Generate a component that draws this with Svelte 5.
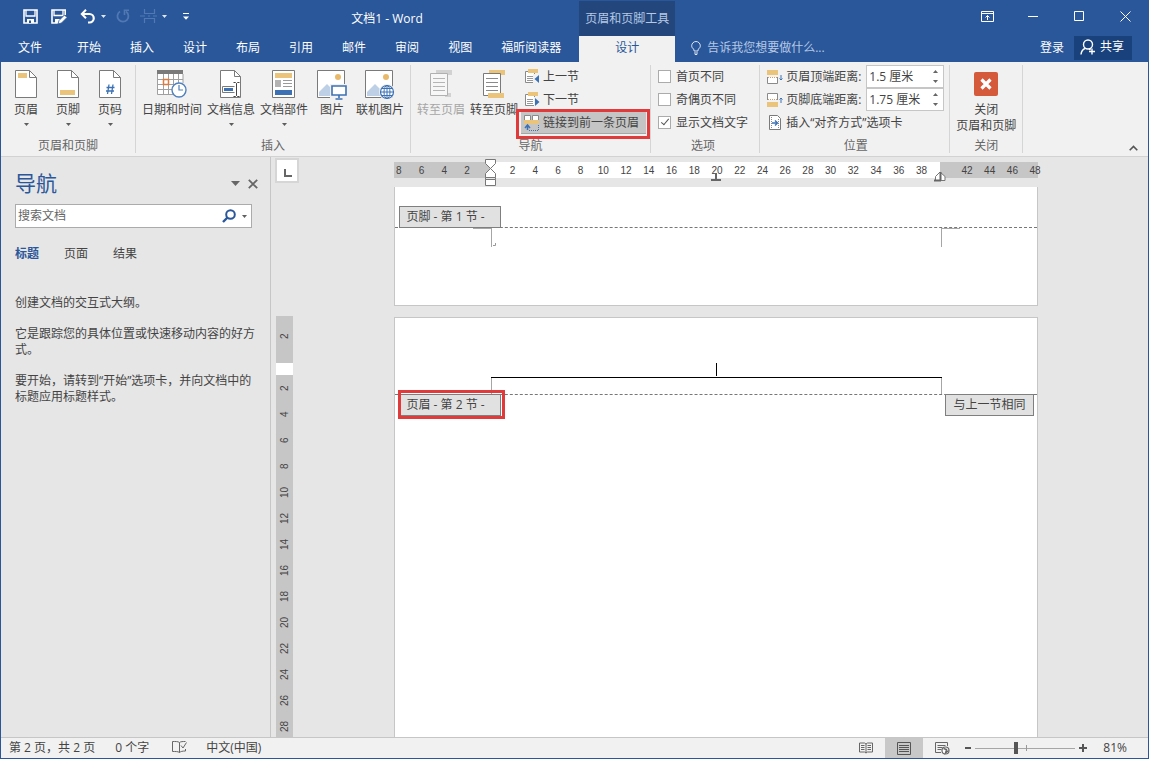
<script lang="ts">
  import type { Snippet } from 'svelte';

  const tabs = ['开始', '插入', '设计', '布局', '引用', '邮件', '审阅', '视图', '福昕阅读器'];
  const paneTabs = ['标题', '页面', '结果'];
  const rulerMarks = Array.from({ length: 29 }, (_, i) => i * 2 - 8);
  const verticalMarks = Array.from({ length: 16 }, (_, i) => i * 2 - 2);

  let activePane = $state('标题');
  let query = $state('');
  let firstDifferent = $state(false);
  let oddEvenDifferent = $state(false);
  let showText = $state(true);
  let headerDistance = $state('1.5 厘米');
  let footerDistance = $state('1.75 厘米');
  let linked = $state(true);
  let zoom = $state(81);

  function markLabel(n: number) {
    return n === 0 || n === 40 ? '' : String(Math.abs(n));
  }
</script>

{#snippet caret()}
  <svg class="caret" width="5" height="3" viewBox="0 0 5 3"><path d="M0 0h5L2.5 3z" fill="currentColor" /></svg>
{/snippet}

{#snippet headerIcon()}
  <svg width="22" height="28" viewBox="0 0 22 28">
    <path d="M.5.5h14l7 7v20H.5z" fill="#fff" stroke="#7a7a7a" />
    <path d="M14.5.5v7h7" fill="none" stroke="#7a7a7a" />
    <path d="M3 3h9v5H3z" fill="#e9c47a" />
  </svg>
{/snippet}

{#snippet footerIcon()}
  <svg width="22" height="28" viewBox="0 0 22 28">
    <path d="M.5.5h14l7 7v20H.5z" fill="#fff" stroke="#7a7a7a" />
    <path d="M14.5.5v7h7" fill="none" stroke="#7a7a7a" />
    <path d="M3 20h15v5H3z" fill="#e9c47a" />
  </svg>
{/snippet}

{#snippet numberIcon()}
  <svg width="22" height="28" viewBox="0 0 22 28">
    <path d="M.5.5h14l7 7v20H.5z" fill="#fff" stroke="#7a7a7a" />
    <path d="M14.5.5v7h7" fill="none" stroke="#7a7a7a" />
    <path d="M10 14.5L8.5 24M14 14.5L12.5 24M7.5 17.5h8M7 21h8" fill="none" stroke="#3c72b4" stroke-width="1.3" />
  </svg>
{/snippet}

{#snippet dateIcon()}
  <svg width="30" height="28" viewBox="0 0 30 28">
    <path d="M1 3h25v22H1z" fill="#fff" />
    <path d="M.5 3v21.5H16M6.5 4v20M11.5 4v20M16.5 4v10M21.5 4v9M26 4v9M1 9.5h25M1 14.5h17M1 19.5h14" fill="none" stroke="#a0a0a0" />
    <path d="M0 0h26v4H0z" fill="#7a7a7a" />
    <path d="M6.5 9.5h5v5h-5z" fill="#fff" stroke="#dd7b3f" stroke-width="1.5" />
    <circle cx="22" cy="20" r="7" fill="#fff" stroke="#4f81bd" stroke-width="1.4" />
    <path d="M22 15v5h4" fill="none" stroke="#4f81bd" stroke-width="1.2" />
  </svg>
{/snippet}

{#snippet infoIcon()}
  <svg width="22" height="28" viewBox="0 0 22 28">
    <path d="M.5.5h14l6 6v21H.5z" fill="#fff" stroke="#7a7a7a" />
    <path d="M14.5.5v6h6" fill="none" stroke="#7a7a7a" />
    <path d="M2.5 16.5h13v6h-13z" fill="#fff" stroke="#7a7a7a" />
    <path d="M4 18h9v3H4z" fill="#3c72b4" />
    <path d="M16.5 13v14" stroke="#fff" stroke-width="4" />
    <path d="M13.5 12.5h2l1 1 1-1h2M16.5 13.5v12M13.5 26.5h2l1-1 1 1h2" fill="none" stroke="#444" />
  </svg>
{/snippet}

{#snippet partsIcon()}
  <svg width="24" height="28" viewBox="0 0 24 28">
    <path d="M.5.5h22v27H.5z" fill="#fff" stroke="#7a7a7a" />
    <path d="M3 3h17v5H3z" fill="#e9c47a" />
    <path d="M3 10h6v7H3z" fill="#b3b3b3" />
    <path d="M11 10.5h9M11 13.5h9M11 16.5h9" stroke="#9a9a9a" />
    <path d="M3 20h17v5H3z" fill="#3c72b4" />
  </svg>
{/snippet}

{#snippet pictureIcon()}
  <svg width="30" height="30" viewBox="0 0 30 30">
    <path d="M.5.5h27v27H.5z" fill="#fff" stroke="#7a7a7a" />
    <circle cx="21" cy="7" r="3" fill="#e9b96a" />
    <path d="M2 26v-4l8-8 6 6v6z" fill="#bdd0e6" />
    <path d="M13 14h17v16H13z" fill="#f1f1f1" />
    <path d="M15 16h14v9H15z" fill="#fff" stroke="#3c72b4" stroke-width="1.6" />
    <path d="M22 25v3M18.5 29h7" stroke="#3c72b4" stroke-width="1.6" />
  </svg>
{/snippet}

{#snippet onlineIcon()}
  <svg width="30" height="30" viewBox="0 0 30 30">
    <path d="M.5.5h27v27H.5z" fill="#fff" stroke="#7a7a7a" />
    <circle cx="21" cy="7" r="3" fill="#e9b96a" />
    <path d="M2 26v-4l8-8 7 7v5z" fill="#bdd0e6" />
    <circle cx="22" cy="22" r="8" fill="#f1f1f1" />
    <circle cx="22" cy="22" r="6.5" fill="#fff" stroke="#3c72b4" stroke-width="1.2" />
    <ellipse cx="22" cy="22" rx="3" ry="6.5" fill="none" stroke="#3c72b4" />
    <path d="M15.5 22h13M17 18.5h10M17 25.5h10M22 15.5v13" stroke="#3c72b4" />
  </svg>
{/snippet}

{#snippet toHeaderIcon()}
  <svg width="22" height="28" viewBox="0 0 22 28">
    <path d="M6 0h16v5H6zM15 23h6v4h-6z" fill="#d2d2d2" />
    <path d="M.5 3.5h17v22H.5z" fill="#f7f7f7" stroke="#b0b0b0" />
    <path d="M3 8.5h12M3 12.5h12M3 16.5h12M3 20.5h12" stroke="#b5b5b5" />
  </svg>
{/snippet}

{#snippet toFooterIcon()}
  <svg width="22" height="28" viewBox="0 0 22 28">
    <path d="M6 0h16v5H6z" fill="#e9c47a" />
    <path d="M.5 3.5h17v22H.5z" fill="#fff" stroke="#7a7a7a" />
    <path d="M3 8.5h12M3 12.5h12M3 16.5h12M3 20.5h12" stroke="#8a8a8a" />
    <path d="M5 23h16v5H5z" fill="#e9c47a" />
  </svg>
{/snippet}

{#snippet bigButton(label: string, icon: Snippet, arrow: boolean, disabled: boolean = false)}
  <button class="big" type="button" {disabled}>
    <span class="big-icon">{@render icon()}</span>
    <span class="big-label">{label}</span>
    {#if arrow}{@render caret()}{/if}
  </button>
{/snippet}

{#snippet spinner(id: string)}
  <span class="steps">
    <button type="button" aria-label="增大" aria-controls={id}>
      <svg width="5" height="3" viewBox="0 0 5 3"><path d="M0 3h5L2.5 0z" fill="#666" /></svg>
    </button>
    <button type="button" aria-label="减小" aria-controls={id}>
      <svg width="5" height="3" viewBox="0 0 5 3"><path d="M0 0h5L2.5 3z" fill="#666" /></svg>
    </button>
  </span>
{/snippet}

<div class="window">
  <header class="titlebar">
    <div class="title-left">
      <div class="quick">
        <button type="button" aria-label="保存">
          <svg width="15" height="15" viewBox="0 0 15 15"><path d="M1 1h13v13H1z" fill="none" stroke="#fff" stroke-width="1.6" /><path d="M3 1v6h9V1" fill="none" stroke="#fff" stroke-width="1.3" /><path d="M4 10h7v4H4z" fill="#fff" /><path d="M6 11.5h2V14H6z" fill="#2a579a" /></svg>
        </button>
        <button type="button" aria-label="另存为">
          <svg width="16" height="15" viewBox="0 0 16 15"><path d="M14.2 6V1H1v13h6" fill="none" stroke="#fff" stroke-width="1.6" /><path d="M3 1v5.5h9V1" fill="none" stroke="#fff" stroke-width="1.3" /><path d="M4 10h5v4H4z" fill="#fff" /><path d="M7 15l1-3.5L13.5 6 16 8.5 10.5 14z" fill="#fff" stroke="#2a579a" stroke-width=".8" /></svg>
        </button>
        <button type="button" class="with-caret" aria-label="撤消">
          <svg width="16" height="15" viewBox="0 0 16 15"><path d="M2 5h7.5a4 4 0 0 1 0 8.500H8" fill="none" stroke="#fff" stroke-width="2.2" /><path d="M6 .8L1.8 5 6 9.2" fill="none" stroke="#fff" stroke-width="2" /></svg>
          {@render caret()}
        </button>
        <button type="button" class="dim" aria-label="恢复" disabled>
          <svg width="14" height="14" viewBox="0 0 14 14"><path d="M4 2.500A5.500 5.500 0 1 0 10 2.600" fill="none" stroke="currentColor" stroke-width="1.8" /><path d="M8.5 6V1.200H13" fill="none" stroke="currentColor" stroke-width="1.6" /></svg>
        </button>
        <button type="button" class="with-caret" aria-label="分页">
          <svg class="dim" width="17" height="14" viewBox="0 0 17 14"><path d="M4.500 0v4.500h10V0M4.500 14V9.500h10V14M0 7h5M8 7h2M13 7h4" fill="none" stroke="currentColor" stroke-width="1.2" /></svg>
          {@render caret()}
        </button>
        <button type="button" aria-label="自定义快速访问工具栏">
          <svg width="6" height="7" viewBox="0 0 6 7"><path d="M0 .5h6" stroke="#fff" /><path d="M0 3.500h6L3 6.800z" fill="#fff" /></svg>
        </button>
      </div>
      <h1>文档1 - Word</h1>
    </div>
    <div class="context-title">页眉和页脚工具</div>
    <div class="window-buttons">
      <button type="button" aria-label="功能区显示选项">
        <svg width="13" height="11" viewBox="0 0 13 11"><path d="M.5.5h12v10H.5zM.5 2.500h12M6.500 9V4.500M4.500 6.500l2-2 2 2" fill="none" stroke="#fff" /></svg>
      </button>
      <button type="button" aria-label="最小化">
        <svg width="10" height="11" viewBox="0 0 10 11"><path d="M0 5.500h10" stroke="#fff" /></svg>
      </button>
      <button type="button" aria-label="最大化">
        <svg width="10" height="10" viewBox="0 0 10 10"><path d="M.5.5h9v9h-9z" fill="none" stroke="#fff" /></svg>
      </button>
      <button type="button" aria-label="关闭">
        <svg width="11" height="11" viewBox="0 0 11 11"><path d="M.5.5l10 10M10.500.5l-10 10" stroke="#fff" /></svg>
      </button>
    </div>

    <nav class="tabs">
      <button type="button" class="file">文件</button>
      {#each tabs as tab}
        <button type="button">{tab}</button>
      {/each}
    </nav>
    <button type="button" class="context-tab">设计</button>
    <div class="tab-right">
      <label class="tell">
        <svg width="10" height="14" viewBox="0 0 10 14"><path d="M3 10V8.500C1.500 7.500.7 6.300.7 4.800a4.300 4.300 0 0 1 8.600 0C9.300 6.300 8.500 7.500 7 8.500V10zM3 12h4M3.800 13.500h2.400" fill="none" stroke="#dbe5f3" /></svg>
        <input type="text" aria-label="操作说明搜索" placeholder="告诉我您想要做什么..." />
      </label>
      <a href="#login">登录</a>
      <button type="button" class="share">
        <svg width="16" height="16" viewBox="0 0 16 16"><circle cx="8" cy="5.500" r="4.500" fill="none" stroke="#fff" stroke-width="1.400" /><path d="M1 15.500c.3-3 1.600-5 4-6M9 9.800l1.500 1M12 9.500v6M9 12.500h6" fill="none" stroke="#fff" stroke-width="1.400" /></svg>
        共享
      </button>
    </div>
  </header>

  <section class="ribbon">
    <div class="group">
      <div class="controls">
        {@render bigButton('页眉', headerIcon, true)}
        {@render bigButton('页脚', footerIcon, true)}
        {@render bigButton('页码', numberIcon, true)}
      </div>
      <h2>页眉和页脚</h2>
    </div>

    <div class="group">
      <div class="controls spaced">
        {@render bigButton('日期和时间', dateIcon, false)}
        {@render bigButton('文档信息', infoIcon, true)}
        {@render bigButton('文档部件', partsIcon, true)}
        {@render bigButton('图片', pictureIcon, false)}
        {@render bigButton('联机图片', onlineIcon, false)}
      </div>
      <h2>插入</h2>
    </div>

    <div class="group">
      <div class="controls spaced">
        {@render bigButton('转至页眉', toHeaderIcon, false, true)}
        {@render bigButton('转至页脚', toFooterIcon, false)}
        <div class="stack">
          <button type="button" class="small">
            <svg width="16" height="16" viewBox="0 0 16 16"><path d="M1.500 2.500h9v11h-9z" fill="#fff" stroke="#8a8a8a" /><path d="M3 7.500h6M3 9.500h6M3 11.500h6" stroke="#999" /><path d="M4 0h10v4H4z" fill="#e9c47a" /><path d="M9 5h7v10H9z" fill="#f1f1f1" /><path d="M15 6v8l-4.500-4z" fill="#3c72b4" /></svg>
            上一节
          </button>
          <button type="button" class="small">
            <svg width="16" height="16" viewBox="0 0 16 16"><path d="M1.500 2.500h9v11h-9z" fill="#fff" stroke="#8a8a8a" /><path d="M3 7.500h6M3 9.500h6M3 11.500h6" stroke="#999" /><path d="M4 0h10v4H4z" fill="#e9c47a" /><path d="M10 5h6v10h-6z" fill="#f1f1f1" /><path d="M11 6v8l4.500-4z" fill="#3c72b4" /></svg>
            下一节
          </button>
          <button type="button" class="small callout" class:pressed={linked} aria-pressed={linked} onclick={() => (linked = !linked)}>
            <svg width="16" height="16" viewBox="0 0 16 16"><path d="M.5 5V.5h6V5M8.500 5V.5h6V5" fill="#fff" stroke="#8a8a8a" /><path d="M0 5h15v4H0z" fill="#e9c47a" /><path d="M3.500 15v-4M1 13l2.500-3L6 13" fill="none" stroke="#3c72b4" stroke-width="1.500" /><path d="M5 15.500h9.500V10" fill="none" stroke="#3c72b4" stroke-dasharray="1 1" /></svg>
            链接到前一条页眉
          </button>
        </div>
      </div>
      <h2>导航</h2>
    </div>

    <div class="group options">
      <div class="stack">
        <label class="check"><input type="checkbox" bind:checked={firstDifferent} />首页不同</label>
        <label class="check"><input type="checkbox" bind:checked={oddEvenDifferent} />奇偶页不同</label>
        <label class="check"><input type="checkbox" bind:checked={showText} />显示文档文字</label>
      </div>
      <h2>选项</h2>
    </div>

    <div class="group position">
      <div class="stack">
        <div class="distance">
          <svg width="16" height="16" viewBox="0 0 16 16"><path d="M.5 8v6.500h10V8" fill="#fff" stroke="#8a8a8a" /><path d="M0 1h11v5H0z" fill="#e9c47a" /><path d="M1 8.500h10" stroke="#dd9a5f" stroke-dasharray="1 1" /><path d="M14 6v5M12.500 9.500L14 11l1.500-1.500" fill="none" stroke="#3c72b4" /></svg>
          <label for="header-distance">页眉顶端距离:</label>
          <span class="field">
            <input id="header-distance" type="text" bind:value={headerDistance} />
            {@render spinner('header-distance')}
          </span>
        </div>
        <div class="distance">
          <svg width="16" height="16" viewBox="0 0 16 16"><path d="M.5 8V1.500h10V8" fill="#fff" stroke="#8a8a8a" /><path d="M0 10h11v5H0z" fill="#e9c47a" /><path d="M1 7.500h10" stroke="#dd9a5f" stroke-dasharray="1 1" /><path d="M14 11V6M12.500 7.500L14 6l1.500 1.500" fill="none" stroke="#3c72b4" /></svg>
          <label for="footer-distance">页脚底端距离:</label>
          <span class="field">
            <input id="footer-distance" type="text" bind:value={footerDistance} />
            {@render spinner('footer-distance')}
          </span>
        </div>
        <button type="button" class="small align">
          <svg width="16" height="16" viewBox="0 0 16 16"><path d="M2.500.5h8l3 3v11h-11z" fill="#fff" stroke="#7a7a7a" /><path d="M4.500 2v12M11.500 4v10" stroke="#8a8a8a" stroke-dasharray="1 1" /><path d="M5 8h5M8 5.500L10.500 8 8 10.500" fill="none" stroke="#3c72b4" stroke-width="1.400" /></svg>
          插入“对齐方式”选项卡
        </button>
      </div>
      <h2>位置</h2>
    </div>

    <div class="group">
      <div class="controls">
        <button type="button" class="big">
          <span class="big-icon">
            <svg width="24" height="26" viewBox="0 0 24 26"><rect y="2" width="24" height="24" rx="2" fill="#d5593b" /><path d="M7.500 9.500l9 9M16.500 9.500l-9 9" stroke="#fff" stroke-width="3.200" /></svg>
          </span>
          <span class="big-label">关闭<br />页眉和页脚</span>
        </button>
      </div>
      <h2>关闭</h2>
    </div>

    <button type="button" class="collapse" aria-label="折叠功能区">
      <svg width="9" height="6" viewBox="0 0 9 6"><path d="M.7 5.300L4.500 1.500l3.800 3.800" fill="none" stroke="#555" stroke-width="1.600" /></svg>
    </button>
  </section>

  <main>
    <aside>
      <div class="pane-head">
        <h2>导航</h2>
        <button type="button" aria-label="任务窗格选项"><svg width="9" height="5" viewBox="0 0 9 5"><path d="M0 0h9L4.500 5z" fill="#666" /></svg></button>
        <button type="button" aria-label="关闭窗格"><svg width="10" height="10" viewBox="0 0 10 10"><path d="M.8.8l8.400 8.400M9.200.8L.8 9.200" stroke="#666" stroke-width="1.800" /></svg></button>
      </div>
      <div class="search">
        <input type="text" aria-label="搜索文档" placeholder="搜索文档" bind:value={query} />
        <button type="button" aria-label="搜索"><svg width="14" height="14" viewBox="0 0 14 14"><circle cx="8.500" cy="5.500" r="4.300" fill="none" stroke="#2a579a" stroke-width="2" /><path d="M5.500 8.500L1 13" stroke="#2a579a" stroke-width="2.400" /></svg></button>
        <button type="button" aria-label="搜索选项">{@render caret()}</button>
      </div>
      <div class="pane-tabs">
        {#each paneTabs as tab}
          <button type="button" class:active={activePane === tab} onclick={() => (activePane = tab)}>{tab}</button>
        {/each}
      </div>
      <div class="hint">
        <p>创建文档的交互式大纲。</p>
        <p>它是跟踪您的具体位置或快速移动内容的好方式。</p>
        <p>要开始，请转到“开始”选项卡，并向文档中的标题应用标题样式。</p>
      </div>
    </aside>

    <div class="gutter">
      <button type="button" class="tab-stop" aria-label="左对齐式制表符"><svg width="8" height="8" viewBox="0 0 8 8"><path d="M1 0v7h7" fill="none" stroke="#666" stroke-width="2" /></svg></button>
      <div class="v-ruler">
        {#each verticalMarks as n}
          <span>{markLabel(n)}</span>
        {/each}
      </div>
    </div>

    <div class="canvas">
      <div class="h-ruler">
        <div class="marks">
          {#each rulerMarks as n}
            <span>{markLabel(n)}</span>
          {/each}
        </div>
        <svg class="marker left-indent" width="12" height="28" viewBox="0 0 12 28"><path d="M.5.5h10v4l-5 5-5-5zM5.500 9.500l5 5v4H.5v-4zM.5 20.500h10v6H.5zM.5 18.500v2M10.500 18.500v2" fill="#fff" stroke="#777" /></svg>
        <svg class="marker center-tab" width="10" height="8" viewBox="0 0 10 8"><path d="M5 0v6M0 7h10" stroke="#666" stroke-width="2" /></svg>
        <svg class="marker right-indent" width="12" height="11" viewBox="0 0 12 11"><path d="M1.500 9.500v-4L6 1l5 4.500v4z" fill="#fff" stroke="#777" /><path d="M6.500 1v8M0 9.500h7" stroke="#666" stroke-width="2" /></svg>
      </div>

      <article class="page first">
        <div class="footer-line"><span class="tag">页脚 - 第 1 节 -</span></div>
        <div class="corners">
          <span class="corner left"></span>
          <svg width="4" height="4" viewBox="0 0 4 4"><path d="M3.500 0v2.500H1" fill="none" stroke="#999" /></svg>
          <span class="corner right"></span>
        </div>
      </article>

      <article class="page second">
        <div class="header-text"><span class="cursor"></span></div>
        <div class="header-gap"></div>
        <div class="header-line">
          <span class="tag callout">页眉 - 第 2 节 -</span>
          <span class="tag same">与上一节相同</span>
        </div>
      </article>
    </div>
  </main>

  <footer class="status">
    <span>第 2 页，共 2 页</span>
    <span>0 个字</span>
    <button type="button" aria-label="校对"><svg width="15" height="14" viewBox="0 0 15 14"><path d="M7.500 2.500C6 1.300 3 1.500.5 1.500v10c2.500 0 5.500-.2 7 1zM7.500 12.500c1-1 3-1.500 6-1.500V9M7.500 2.500C8.500 1.500 11 1.500 13.500 1.500M9 5.500l2 2.500 3.500-5.500" fill="none" stroke="#666" /></svg></button>
    <span>中文(中国)</span>
    <div class="views">
      <button type="button" aria-label="阅读视图"><svg width="14" height="12" viewBox="0 0 14 12"><path d="M.5 1h5L7 2l1.500-1h5v9h-5L7 11l-1.500-1h-5zM7 2v9M2 3.500h3.500M2 5.500h3.500M2 7.500h3.500M8.500 3.500H12M8.500 5.500H12M8.500 7.500H12" fill="none" stroke="#666" /></svg></button>
      <button type="button" class="on" aria-label="页面视图"><svg width="14" height="13" viewBox="0 0 14 13"><path d="M.5.5h13v12H.5zM2 3.500h10M2 5.500h10M2 7.500h10M2 9.500h10" fill="none" stroke="#555" /></svg></button>
      <button type="button" aria-label="Web 版式视图"><svg width="15" height="13" viewBox="0 0 15 13"><path d="M12.500 4V.5H.5v10H6M2.500 3.500h8M2.500 5.500h5M2.500 7.500h4" fill="none" stroke="#666" /><circle cx="10.500" cy="8.500" r="3.500" fill="#fff" stroke="#666" stroke-width="1.200" /><path d="M8.500 6.500l3 1-1 3.500 3-2.500" fill="none" stroke="#666" stroke-width="1.400" /></svg></button>
    </div>
    <div class="zoom">
      <button type="button" aria-label="缩小"><svg width="6" height="8" viewBox="0 0 6 8"><path d="M0 4h6" stroke="#555" stroke-width="2" /></svg></button>
      <input type="range" min="1" max="200" aria-label="缩放" bind:value={zoom} />
      <button type="button" aria-label="放大"><svg width="8" height="8" viewBox="0 0 8 8"><path d="M0 4h8M4 0v8" stroke="#555" stroke-width="2" /></svg></button>
      <output>{zoom}%</output>
    </div>
  </footer>
</div>

<style>
  :global(body) {
    margin: 0;
    background: #e6e6e6;
  }

  .window {
    box-sizing: border-box;
    height: 100vh;
    display: flex;
    flex-direction: column;
    border: 1px solid #2a579a;
    border-top: 0;
    overflow: hidden;
    background: #e6e6e6;
    color: #444;
    font-family: 'Open Sans', 'Noto Sans CJK SC', sans-serif;
    font-size: 12px;
    line-height: 16px;
  }

  button,
  input {
    font: inherit;
    color: inherit;
  }

  button {
    display: flex;
    align-items: center;
    justify-content: center;
    padding: 0;
    border: 0;
    background: none;
    white-space: nowrap;
  }

  h1,
  h2,
  p {
    margin: 0;
    font-size: 12px;
    font-weight: 400;
  }

  svg {
    display: block;
    flex-shrink: 0;
  }

  /* title bar and tabs */
  .titlebar {
    display: grid;
    grid-template-columns: auto 96px 1fr;
    grid-template-rows: 36px 26px;
    background: #2a579a;
    color: #fff;
  }

  .title-left {
    display: flex;
    align-items: center;
  }

  .title-left h1 {
    flex: 1;
    text-align: center;
    padding-top: 2px;
  }

  .quick {
    display: flex;
    align-items: center;
    gap: 13px;
    padding: 0 6px 4px 22px;
  }

  .with-caret {
    gap: 5px;
  }

  .with-caret + button,
  .dim + .with-caret {
    margin-left: -3px;
  }

  .quick button:last-child {
    margin-left: 3px;
  }

  .dim {
    color: #5078b3;
  }

  .context-title {
    display: flex;
    align-items: center;
    justify-content: center;
    margin-top: 1px;
    background: #23477d;
    color: #b6c8e4;
  }

  .window-buttons {
    display: flex;
    justify-content: flex-end;
    height: 32px;
  }

  .window-buttons button {
    width: 46px;
  }

  .tabs {
    display: flex;
    gap: 1px;
    padding-right: 4px;
  }

  .tabs button {
    padding: 0 14px 3px;
  }

  .tabs .file {
    padding: 0 17px 3px;
    margin-right: 3px;
  }

  .context-tab {
    padding-bottom: 3px;
    background: #f1f1f1;
    color: #2a579a;
  }

  .tab-right {
    display: flex;
    align-items: center;
    padding: 0 16px 2px;
  }

  .tell {
    flex: 1;
    display: flex;
    align-items: center;
    gap: 6px;
  }

  .tell input {
    flex: 1;
    min-width: 0;
    padding: 0;
    border: 0;
    outline: 0;
    background: none;
  }

  .tell input::placeholder {
    color: #b6c8e4;
  }

  .tab-right a {
    color: #fff;
    text-decoration: none;
    margin-right: 10px;
  }

  .share {
    gap: 4px;
    height: 24px;
    padding: 0 8px 2px 6px;
    background: #19427c;
  }

  /* ribbon */
  .ribbon {
    display: flex;
    padding: 3px 0;
    background: #f1f1f1;
    border-bottom: 1px solid #d2d2d2;
  }

  .group {
    display: flex;
    flex-direction: column;
    justify-content: space-between;
    height: 88px;
    padding: 0 4px;
    border-right: 1px solid #d5d5d5;
  }

  .group h2 {
    line-height: 15px;
    text-align: center;
    color: #666;
  }

  .controls {
    display: flex;
  }

  .spaced {
    gap: 1px;
  }

  .big {
    box-sizing: border-box;
    flex-direction: column;
    justify-content: flex-start;
    min-width: 42px;
    height: 72px;
    padding: 5px 2px 0;
  }

  .big:disabled {
    color: #a6a6a6;
  }

  .big-icon {
    display: flex;
    height: 32px;
  }

  .big-label {
    line-height: 16px;
  }

  .caret {
    opacity: 0.85;
  }

  .big .caret {
    margin-top: 5px;
  }

  .stack {
    display: flex;
    flex-direction: column;
  }

  .small,
  .check,
  .distance {
    display: flex;
    align-items: center;
    height: 23px;
  }

  .small {
    box-sizing: border-box;
    justify-content: flex-start;
    gap: 3px;
    padding: 0 7px 0 3px;
    border: 1px solid transparent;
    border-width: 1px 0;
  }

  .pressed {
    background: #c5c5c5;
    border-color: #a6a6a6;
  }

  .callout {
    position: relative;
  }

  .callout::after {
    content: '';
    position: absolute;
    inset: -3px -4px -6px -5px;
    border: 3px solid #e03a3a;
    pointer-events: none;
  }

  .options {
    padding: 0 11px 0 7px;
  }

  .check {
    gap: 5px;
  }

  .check input {
    appearance: none;
    width: 13px;
    height: 13px;
    margin: 0;
    border: 1px solid #ababab;
    background: #fff;
  }

  .check input:checked::after {
    content: '';
    display: block;
    width: 3px;
    height: 7px;
    margin: 0 auto;
    border: solid #555;
    border-width: 0 1px 1px 0;
    rotate: 40deg;
  }

  .position {
    padding: 0 5px 0 7px;
  }

  .distance {
    gap: 3px;
  }

  .distance label {
    flex: 1;
    padding-right: 2px;
    white-space: nowrap;
  }

  .field {
    box-sizing: border-box;
    display: flex;
    width: 78px;
    height: 23px;
    border: 1px solid #c6c6c6;
    background: #fff;
  }

  .field input {
    flex: 1;
    min-width: 0;
    padding: 0 0 0 2px;
    border: 0;
    outline: 0;
    background: none;
  }

  .steps {
    display: flex;
    flex-direction: column;
    width: 15px;
  }

  .steps button {
    flex: 1;
  }

  .align {
    padding-left: 0;
  }

  .collapse {
    align-self: flex-end;
    margin-left: auto;
    padding: 2px 10px;
  }

  /* navigation pane */
  main {
    flex: 1;
    min-height: 0;
    display: flex;
  }

  aside {
    box-sizing: border-box;
    width: 270px;
    padding: 14px 18px 0 14px;
    border-right: 1px solid #c6c6c6;
  }

  .pane-head {
    display: flex;
    align-items: center;
    gap: 8px;
    margin: 0 -6px 8px 0;
  }

  .pane-head h2 {
    flex: 1;
    font-size: 21px;
    line-height: 25px;
    color: #2a579a;
  }

  .search {
    box-sizing: border-box;
    display: flex;
    height: 24px;
    border: 1px solid #ababab;
    background: #fff;
  }

  .search input {
    flex: 1;
    min-width: 0;
    padding: 0 2px;
    border: 0;
    outline: 0;
    background: none;
  }

  .search input::placeholder {
    color: #666;
  }

  .search button:last-child {
    padding: 0 4px 0 6px;
  }

  .pane-tabs {
    display: flex;
    gap: 25px;
    margin: 18px 0 33px;
  }

  .pane-tabs .active {
    color: #2a579a;
    font-weight: 700;
  }

  .hint {
    margin-right: -4px;
  }

  .hint p {
    margin-bottom: 15px;
  }

  /* rulers */
  .gutter {
    box-sizing: border-box;
    display: flex;
    flex-direction: column;
    width: 24px;
    padding-left: 4px;
  }

  .tab-stop {
    box-sizing: border-box;
    width: 24px;
    height: 25px;
    margin: 1px 0 133px;
    padding: 4px 0 0 1px;
    border: 2px solid #d6d6d6;
    background: #fff;
    flex-shrink: 0;
  }

  .v-ruler {
    flex: 1;
    min-height: 0;
    width: 17px;
    margin-left: 1px;
    overflow: hidden;
    background: linear-gradient(#c6c6c6 47px, #fff 47px, #fff 59px, #c6c6c6 59px);
  }

  .v-ruler span {
    display: flex;
    align-items: center;
    justify-content: center;
    height: 26px;
    width: 18px;
    writing-mode: vertical-rl;
    rotate: 180deg;
    font-family: 'Liberation Sans', Arial, sans-serif;
    font-size: 10px;
  }

  .v-ruler span:first-child {
    margin-top: 7px;
  }

  .canvas {
    flex: 1;
    min-width: 0;
    display: flex;
    flex-direction: column;
    align-items: center;
    padding-right: 12px;
  }

  .h-ruler {
    position: relative;
    width: 644px;
    height: 16px;
    margin: 5px 0 9px;
    background: linear-gradient(to right, #c6c6c6 97px, #fff 97px, #fff 546px, #c6c6c6 546px);
  }

  .marks {
    display: grid;
    grid-template-columns: repeat(29, 1fr);
    margin: 0 -9px 0 -6px;
    font-family: 'Liberation Sans', Arial, sans-serif;
    font-size: 10px;
    line-height: 17px;
    text-align: center;
  }

  .marker {
    position: absolute;
  }

  .left-indent {
    left: 91px;
    top: -3px;
  }

  .center-tab {
    left: 317px;
    top: 11px;
  }

  .right-indent {
    left: 540px;
    top: 9px;
  }

  /* pages */
  .page {
    box-sizing: border-box;
    width: 644px;
    border: 1px solid #c6c6c6;
    background: #fff;
  }

  .first {
    height: 119px;
    margin-bottom: 11px;
    padding-top: 19px;
    border-top: 0;
    flex-shrink: 0;
  }

  .second {
    flex: 1;
    border-bottom: 0;
  }

  .tag {
    box-sizing: border-box;
    min-width: 102px;
    height: 22px;
    padding: 2px 7px;
    border: 1px solid #7f7f7f;
    background: #e1e1e1;
    white-space: nowrap;
  }

  .same {
    min-width: 0;
  }

  .footer-line,
  .header-line {
    display: flex;
    justify-content: space-between;
    padding: 0 3px 0 4px;
  }

  .footer-line {
    border-bottom: 1px dashed #777;
  }

  .footer-line .tag {
    margin-bottom: -1px;
  }

  .corners {
    display: flex;
    align-items: flex-end;
    padding: 0 77px 0 78px;
  }

  .corner {
    box-sizing: border-box;
    width: 19px;
    height: 19px;
    border: 0 solid #a6a6a6;
    border-top-width: 1px;
  }

  .left {
    border-right-width: 1px;
  }

  .right {
    border-left-width: 1px;
    margin-left: auto;
  }

  .header-text {
    display: flex;
    justify-content: center;
    margin: 0 95px 0 96px;
    padding-top: 45px;
    border-bottom: 1px solid #000;
  }

  .cursor {
    width: 1px;
    height: 13px;
    margin-bottom: 1px;
    background: #000;
  }

  .header-gap {
    height: 16px;
    margin: 0 95px 0 96px;
    border: solid #a6a6a6;
    border-width: 0 1px;
  }

  .header-line {
    border-top: 1px dashed #777;
  }

  .header-line .tag {
    margin-top: -1px;
  }

  .header-line .callout::after {
    inset: -5px -5px -4px -2px;
  }

  /* status bar */
  .status {
    display: flex;
    align-items: center;
    gap: 18px;
    height: 20px;
    padding: 0 20px 0 8px;
    border-top: 1px solid #c6c6c6;
    background: #f1f1f1;
  }

  .status > span {
    padding-right: 2px;
    white-space: nowrap;
  }

  .status > button {
    padding: 0 1px 2px 3px;
  }

  .views {
    display: flex;
    align-self: stretch;
    margin-left: auto;
  }

  .views button {
    width: 38px;
  }

  .views .on {
    background: #c8c8c8;
  }

  .zoom {
    display: flex;
    align-items: center;
    gap: 4px;
    margin-left: -14px;
  }

  .zoom input {
    appearance: none;
    width: 100px;
    height: 12px;
    margin: 0;
    background:
      linear-gradient(#999, #999) 51px 3px / 1px 6px no-repeat,
      linear-gradient(#a6a6a6, #a6a6a6) 0 6px / 100% 1px no-repeat;
  }

  .zoom input::-webkit-slider-thumb {
    appearance: none;
    width: 4px;
    height: 12px;
    background: #555;
  }

  .zoom output {
    margin-left: 12px;
    padding-right: 1px;
  }
</style>
